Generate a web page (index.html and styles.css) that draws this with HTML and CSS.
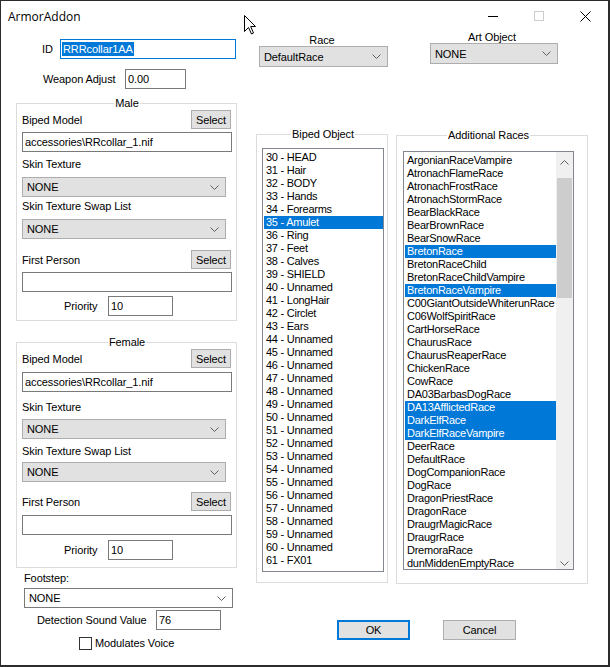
FILE: index.html
```html
<!DOCTYPE html>
<html lang="en">
<head>
    <meta charset="UTF-8">
    <title>ArmorAddon</title>
    <link rel="stylesheet" href="styles.css">
</head>
<body>
<div class="window">
    <div class="titlebar">
        <span class="title">ArmorAddon</span>
        <div class="caption">
            <span class="cap-btn"><svg width="10" height="10"><line x1="0" y1="5.5" x2="10" y2="5.5" stroke="#000"/></svg></span>
            <span class="cap-btn"><svg width="10" height="10"><rect x="0.5" y="0.5" width="9" height="9" fill="none" stroke="#ccc"/></svg></span>
            <span class="cap-btn"><svg width="11" height="11"><path d="M0.5 0.5 L10.5 10.5 M10.5 0.5 L0.5 10.5" stroke="#000" fill="none"/></svg></span>
        </div>
    </div>

    <div class="client">
        <!-- left column: id, models, footstep -->
        <div class="col-left">
            <div class="row id-row">
                <span>ID</span>
                <div class="edit focused"><span class="hl">RRRcollar1AA</span></div>
            </div>
            <div class="row weapon-row">
                <span>Weapon Adjust</span>
                <div class="edit">0.00</div>
            </div>

            <fieldset class="group model male">
                <legend>Male</legend>
                <div class="field-head"><span>Biped Model</span><div class="btn">Select</div></div>
                <div class="edit f-a">accessories\RRcollar_1.nif</div>
                <div class="lbl f-b">Skin Texture</div>
                <div class="combo f-c"><span>NONE</span><svg class="chev" width="9" height="5"><polyline points="0.5,0.5 4.5,4.5 8.5,0.5"/></svg></div>
                <div class="lbl f-d">Skin Texture Swap List</div>
                <div class="combo f-e"><span>NONE</span><svg class="chev" width="9" height="5"><polyline points="0.5,0.5 4.5,4.5 8.5,0.5"/></svg></div>
                <div class="field-head f-f"><span>First Person</span><div class="btn">Select</div></div>
                <div class="edit f-g"></div>
                <div class="row priority-row f-h"><span>Priority</span><div class="edit">10</div></div>
            </fieldset>

            <fieldset class="group model female">
                <legend>Female</legend>
                <div class="field-head"><span>Biped Model</span><div class="btn">Select</div></div>
                <div class="edit f-a">accessories\RRcollar_1.nif</div>
                <div class="lbl f-b">Skin Texture</div>
                <div class="combo f-c"><span>NONE</span><svg class="chev" width="9" height="5"><polyline points="0.5,0.5 4.5,4.5 8.5,0.5"/></svg></div>
                <div class="lbl f-d">Skin Texture Swap List</div>
                <div class="combo f-e"><span>NONE</span><svg class="chev" width="9" height="5"><polyline points="0.5,0.5 4.5,4.5 8.5,0.5"/></svg></div>
                <div class="field-head f-f"><span>First Person</span><div class="btn">Select</div></div>
                <div class="edit f-g"></div>
                <div class="row priority-row f-h"><span>Priority</span><div class="edit">10</div></div>
            </fieldset>

            <div class="lbl footstep-lbl">Footstep:</div>
            <div class="combo white footstep"><span>NONE</span><svg class="chev" width="9" height="5"><polyline points="0.5,0.5 4.5,4.5 8.5,0.5"/></svg></div>
            <div class="row detect-row">
                <span>Detection Sound Value</span>
                <div class="edit">76</div>
            </div>
            <div class="row check-row">
                <span class="check"></span>
                <span>Modulates Voice</span>
            </div>
        </div>

        <!-- right side: race, biped slots, additional races -->
        <div class="col-right">
            <div class="col-pair">
                <div class="col-mid">
                    <div class="top-lbl race-lbl">Race</div>
                    <div class="combo race-combo"><span>DefaultRace</span><svg class="chev" width="9" height="5"><polyline points="0.5,0.5 4.5,4.5 8.5,0.5"/></svg></div>

                    <fieldset class="group biped">
                        <legend>Biped Object</legend>
                        <div class="list biped-list">
                            <div class="items">
                                <div class="item">30 - HEAD</div>
                                <div class="item">31 - Hair</div>
                                <div class="item">32 - BODY</div>
                                <div class="item">33 - Hands</div>
                                <div class="item">34 - Forearms</div>
                                <div class="item sel">35 - Amulet</div>
                                <div class="item">36 - Ring</div>
                                <div class="item">37 - Feet</div>
                                <div class="item">38 - Calves</div>
                                <div class="item">39 - SHIELD</div>
                                <div class="item">40 - Unnamed</div>
                                <div class="item">41 - LongHair</div>
                                <div class="item">42 - Circlet</div>
                                <div class="item">43 - Ears</div>
                                <div class="item">44 - Unnamed</div>
                                <div class="item">45 - Unnamed</div>
                                <div class="item">46 - Unnamed</div>
                                <div class="item">47 - Unnamed</div>
                                <div class="item">48 - Unnamed</div>
                                <div class="item">49 - Unnamed</div>
                                <div class="item">50 - Unnamed</div>
                                <div class="item">51 - Unnamed</div>
                                <div class="item">52 - Unnamed</div>
                                <div class="item">53 - Unnamed</div>
                                <div class="item">54 - Unnamed</div>
                                <div class="item">55 - Unnamed</div>
                                <div class="item">56 - Unnamed</div>
                                <div class="item">57 - Unnamed</div>
                                <div class="item">58 - Unnamed</div>
                                <div class="item">59 - Unnamed</div>
                                <div class="item">60 - Unnamed</div>
                                <div class="item">61 - FX01</div>
                            </div>
                        </div>
                    </fieldset>
                </div>

                <div class="col-races">
                    <div class="top-lbl">Art Object</div>
                    <div class="combo art-combo"><span>NONE</span><svg class="chev" width="9" height="5"><polyline points="0.5,0.5 4.5,4.5 8.5,0.5"/></svg></div>

                    <fieldset class="group races">
                        <legend>Additional Races</legend>
                        <div class="list races-list">
                            <div class="items">
                                <div class="item">ArgonianRaceVampire</div>
                                <div class="item">AtronachFlameRace</div>
                                <div class="item">AtronachFrostRace</div>
                                <div class="item">AtronachStormRace</div>
                                <div class="item">BearBlackRace</div>
                                <div class="item">BearBrownRace</div>
                                <div class="item">BearSnowRace</div>
                                <div class="item sel">BretonRace</div>
                                <div class="item">BretonRaceChild</div>
                                <div class="item">BretonRaceChildVampire</div>
                                <div class="item sel">BretonRaceVampire</div>
                                <div class="item">C00GiantOutsideWhiterunRace</div>
                                <div class="item">C06WolfSpiritRace</div>
                                <div class="item">CartHorseRace</div>
                                <div class="item">ChaurusRace</div>
                                <div class="item">ChaurusReaperRace</div>
                                <div class="item">ChickenRace</div>
                                <div class="item">CowRace</div>
                                <div class="item">DA03BarbasDogRace</div>
                                <div class="item sel">DA13AfflictedRace</div>
                                <div class="item sel">DarkElfRace</div>
                                <div class="item sel">DarkElfRaceVampire</div>
                                <div class="item">DeerRace</div>
                                <div class="item">DefaultRace</div>
                                <div class="item">DogCompanionRace</div>
                                <div class="item">DogRace</div>
                                <div class="item">DragonPriestRace</div>
                                <div class="item">DragonRace</div>
                                <div class="item">DraugrMagicRace</div>
                                <div class="item">DraugrRace</div>
                                <div class="item">DremoraRace</div>
                                <div class="item">dunMiddenEmptyRace</div>
                            </div>
                            <div class="scrollbar">
                                <div class="sb-arrow up"><svg class="chev" width="9" height="5"><polyline points="0.5,4.5 4.5,0.5 8.5,4.5"/></svg></div>
                                <div class="sb-thumb"></div>
                                <div class="sb-arrow down"><svg class="chev" width="9" height="5"><polyline points="0.5,0.5 4.5,4.5 8.5,0.5"/></svg></div>
                            </div>
                        </div>
                    </fieldset>
                </div>
            </div>

            <div class="dlg-buttons">
                <div class="dlg-btn default">OK</div>
                <div class="dlg-btn">Cancel</div>
            </div>
        </div>
    </div>

    <svg class="cursor" width="13" height="20" viewBox="0 0 13 20">
        <path d="M0.5 0.5 L0.5 16.5 L4.5 12.5 L7.5 19 L9.5 18 L6.7 11.5 L11.5 11.5 Z" fill="#fff" stroke="#000" stroke-linejoin="miter"/>
    </svg>
</div>
</body>
</html>
```

FILE: styles.css
```css
/* Reset */
* {
    margin: 0;
    padding: 0;
    box-sizing: border-box;
}

:root {
    --face: #e1e1e1;
    --face-border: #adadad;
    --edit-border: #7a7a7a;
    --group-border: #dcdcdc;
    --accent: #0078d7;
}

body {
    background: #2d2d2d;
    font-family: "Liberation Sans", Arial, sans-serif;
    font-size: 11px;
    letter-spacing: -0.1px;
    color: #000;
}

/* Window frame */
.window {
    position: relative;
    width: 609px;
    height: 666px;
    background: #fff;
    border: 1px solid #2b2b2b;
    overflow: hidden;
}

.titlebar {
    height: 30px;
    display: flex;
    align-items: center;
}

.title {
    flex: 1;
    padding-left: 7px;
    font-family: "Open Sans", "Liberation Sans", sans-serif;
    font-size: 12px;
    letter-spacing: 0;
}

.caption {
    display: flex;
    align-self: stretch;
}

.cap-btn {
    width: 46px;
    display: flex;
    align-items: center;
    justify-content: center;
}

.cursor {
    position: absolute;
    left: 243px;
    top: 14px;
}

/* Layout */
.client {
    display: flex;
    padding-left: 15px;
}

.col-left {
    width: 221px;
}

.col-right {
    margin-left: 19px;
}

.col-pair {
    display: flex;
    align-items: flex-start;
    gap: 8px;
}

.col-mid {
    width: 132px;
}

.col-races {
    width: 192px;
}

.row {
    display: flex;
    align-items: center;
}

.lbl {
    line-height: 13px;
}

/* Controls */
.edit {
    height: 20px;
    border: 1px solid var(--edit-border);
    background: #fff;
    padding-left: 2px;
    line-height: 18px;
    white-space: nowrap;
    overflow: hidden;
}

.edit.focused {
    border-color: var(--accent);
    padding-left: 1px;
    display: flex;
    align-items: center;
}

.hl {
    background: var(--accent);
    color: #fff;
    line-height: 14px;
    padding: 0 1px;
}

.combo {
    height: 20px;
    border: 1px solid var(--face-border);
    background: var(--face);
    display: flex;
    align-items: center;
    justify-content: space-between;
    padding: 0 6px 0 4px;
    white-space: nowrap;
}

.combo.white {
    background: #fff;
    border-color: var(--edit-border);
}

.chev polyline {
    fill: none;
    stroke: #606060;
    stroke-width: 1;
}

.btn {
    width: 40px;
    height: 19px;
    border: 1px solid var(--face-border);
    background: var(--face);
    display: flex;
    align-items: center;
    justify-content: center;
}

.check {
    width: 13px;
    height: 13px;
    border: 1px solid #333;
    background: #fff;
}

/* Top rows */
.id-row {
    margin-top: 8px;
    padding-left: 26px;
}

.id-row .edit {
    width: 176px;
    margin-left: auto;
    margin-right: 1px;
}

.weapon-row {
    margin-top: 10px;
    padding-left: 27px;
}

.weapon-row .edit {
    width: 61px;
    margin-left: auto;
    margin-right: 51px;
}

/* Group boxes */
.group {
    border: 1px solid var(--group-border);
    min-width: 0;
}

.group legend {
    margin: 0 auto;
    padding: 0 1px;
    line-height: 13px;
}

.model {
    padding: 0 4px var(--pb) 5px;
}

.male {
    margin-top: 8px;
    --a: 3px; --b: 6px; --c: 6px; --d: 3px;
    --e: 6px; --f: 11px; --g: 3px; --h: 4px; --pb: 4px;
}

.female {
    margin-top: 15px;
    --a: 4px; --b: 9px; --c: 5px; --d: 6px;
    --e: 4px; --f: 10px; --g: 4px; --h: 5px; --pb: 7px;
}

.field-head {
    display: flex;
    justify-content: space-between;
    align-items: center;
    height: 19px;
}

.field-head .btn {
    margin-right: 1px;
}

.model .combo {
    width: 204px;
}

.f-a { margin-top: var(--a); }
.f-b { margin-top: var(--b); }
.f-c { margin-top: var(--c); }
.f-d { margin-top: var(--d); }
.f-e { margin-top: var(--e); }
.f-f { margin-top: var(--f); }
.f-g { margin-top: var(--g); }
.f-h { margin-top: var(--h); }

.priority-row {
    padding-left: 42px;
}

.priority-row .edit {
    width: 65px;
    margin-left: auto;
    margin-right: 59px;
}

/* Footstep block */
.footstep-lbl {
    margin-top: 4px;
    padding-left: 8px;
}

.footstep {
    width: 209px;
    margin: 3px 0 0 8px;
}

.detect-row {
    margin-top: 2px;
    padding-left: 21px;
}

.detect-row .edit {
    width: 65px;
    margin-left: auto;
    margin-right: 16px;
}

.check-row {
    margin-top: 7px;
    padding-left: 63px;
    gap: 3px;
    line-height: 13px;
}

/* Race / art object */
.top-lbl {
    text-align: center;
    line-height: 12px;
}

.race-lbl {
    margin-top: 3px;
}

.race-combo {
    width: 129px;
    height: 21px;
    margin-left: 3px;
}

.art-combo {
    width: 128px;
    height: 21px;
    margin-left: 34px;
}

/* List boxes */
.list {
    border: 1px solid #828790;
    background: #fff;
    overflow: hidden;
}

.items {
    padding: 2px 0 0 1px;
    overflow: hidden;
}

.item {
    height: 13px;
    line-height: 13px;
    padding-left: 2px;
    white-space: nowrap;
    letter-spacing: -0.25px;
}

.item.sel {
    background: var(--accent);
    color: #fff;
}

.biped {
    margin-top: 61px;
    padding: 7px 3px 10px 5px;
}

.biped-list {
    height: 424px;
}

.races {
    margin-top: 65px;
    padding: 9px 13px 13px 6px;
}

.races-list {
    height: 419px;
    display: flex;
}

.races-list .items {
    flex: 1;
    min-width: 0;
}

.scrollbar {
    width: 17px;
    flex: none;
    background: #f0f0f0;
    display: flex;
    flex-direction: column;
}

.sb-arrow {
    height: 20px;
    display: flex;
    justify-content: center;
}

.sb-arrow.up {
    align-items: flex-start;
    padding-top: 8px;
}

.sb-arrow.down {
    margin-top: auto;
    align-items: flex-end;
    padding-bottom: 3px;
}

.sb-thumb {
    height: 120px;
    margin: 6px 1px 0 1px;
    background: #cdcdcd;
}

/* Dialog buttons */
.dlg-buttons {
    display: flex;
    gap: 33px;
    margin-top: 36px;
    padding-left: 81px;
}

.dlg-btn {
    width: 73px;
    height: 20px;
    border: 1px solid var(--face-border);
    background: var(--face);
    display: flex;
    align-items: center;
    justify-content: center;
}

.dlg-btn.default {
    border: 2px solid var(--accent);
}
```
